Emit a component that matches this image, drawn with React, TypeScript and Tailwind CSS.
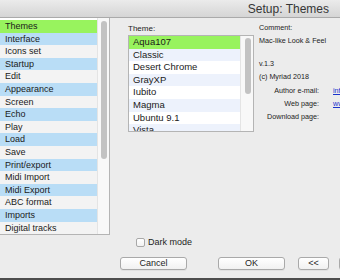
import React from 'react';

const sections = [
    'Themes',
    'Interface',
    'Icons set',
    'Startup',
    'Edit',
    'Appearance',
    'Screen',
    'Echo',
    'Play',
    'Load',
    'Save',
    'Print/export',
    'Midi Import',
    'Midi Export',
    'ABC format',
    'Imports',
    'Digital tracks',
];

const themes = ['Aqua107', 'Classic', 'Desert Chrome', 'GrayXP', 'Iubito', 'Magma', 'Ubuntu 9.1', 'Vista'];

function Button({ label, className }: { label: string; className: string }) {
    return (
        <div
            className={`flex h-[13px] shrink-0 items-center justify-center rounded-[3px] border border-[#a9a9a9] bg-gradient-to-b from-white to-[#f1f1f1] text-[9px] leading-none text-[#1e1e1e] shadow-[0_1px_0_rgba(0,0,0,0.05)] ${className}`}
        >
            {label}
        </div>
    );
}

export default function App() {
    return (
        <div className="flex h-[280px] w-[340px] flex-col overflow-hidden bg-[#ececec] font-['Liberation_Sans',Arial,sans-serif] text-[#1a1a1a]">
            {/* Title bar */}
            <div className="flex h-[18px] shrink-0 items-center justify-end border-b border-[#aaaaaa] bg-gradient-to-b from-[#ebebeb] to-[#d5d5d5] pr-[11px]">
                <span className="text-[12px] leading-none text-[#363636]">Setup: Themes</span>
            </div>

            <div className="flex flex-1">
                {/* Section list */}
                <div className="w-[110px] shrink-0">
                    <div className="flex h-[217px] border-r border-b border-[#b4b4b4] bg-white">
                        <div className="w-[97px] pt-[2px]">
                            {sections.map((s, i) => (
                                <div
                                    key={s}
                                    className={`h-[12.6px] pl-[5px] text-[9px] leading-[12.6px] ${
                                        i === 0 ? 'bg-[#98f35e]' : i % 2 === 1 ? 'bg-[#b9ddf6]' : 'bg-[#f3f3f3]'
                                    }`}
                                >
                                    {s}
                                </div>
                            ))}
                        </div>
                        <div className="flex-1 border-l border-[#e4e4e4] bg-[#f8f8f8] pt-[3px] pl-[3px]">
                            <div className="h-[138px] w-[6px] rounded-full bg-[#c2c2c2]" />
                        </div>
                    </div>
                </div>

                {/* Right side */}
                <div className="flex flex-1 flex-col pb-[8px]">
                    <div className="flex pt-[3px] pl-[18px]">
                        <div className="w-[126px] shrink-0 pt-[3px]">
                            <div className="h-[10px] text-[8px] leading-[10px] text-[#222]">Theme:</div>
                            <div className="mt-[1px] flex h-[97px] overflow-hidden border border-[#b4b4b4] bg-white">
                                <div className="flex-1">
                                    {themes.map((t, i) => (
                                        <div
                                            key={t}
                                            className={`h-[12.6px] pl-[4px] text-[9.5px] leading-[12.6px] ${
                                                i === 0 ? 'bg-[#98f35e]' : i % 2 === 1 ? 'bg-[#edf2fc]' : 'bg-white'
                                            }`}
                                        >
                                            {t}
                                        </div>
                                    ))}
                                </div>
                                <div className="w-[13px] border-l border-[#e4e4e4] bg-[#f8f8f8] pt-[2px] pl-[4px]">
                                    <div className="h-[56px] w-[6px] rounded-full bg-[#c2c2c2]" />
                                </div>
                            </div>
                        </div>

                        {/* Info */}
                        <div className="ml-[5px] flex flex-col text-[7.2px] leading-[13px] whitespace-nowrap text-[#222]">
                            <div className="h-[13px]">Comment:</div>
                            <div className="h-[13px]">Mac-like Look &amp; Feel</div>
                            <div className="h-[10px]" />
                            <div className="h-[13px]">v.1.3</div>
                            <div className="h-[13px]">(c) Myriad 2018</div>
                            <div className="mt-[1px] flex h-[13px]">
                                <span className="w-[60px] text-right">Author e-mail:</span>
                                <span className="ml-[14px] text-[#1a33cc] underline">info@myriad-online.com</span>
                            </div>
                            <div className="flex h-[13px]">
                                <span className="w-[60px] text-right">Web page:</span>
                                <span className="ml-[14px] text-[#1a33cc] underline">www.myriad-online.com</span>
                            </div>
                            <div className="flex h-[13px]">
                                <span className="w-[60px] text-right">Download page:</span>
                            </div>
                        </div>
                    </div>

                    <div className="flex-1" />

                    {/* Dark mode */}
                    <div className="flex h-[9px] items-center pl-[26px]">
                        <div className="h-[9px] w-[9px] rounded-[2px] border border-[#a8a8a8] bg-gradient-to-b from-white to-[#f2f2f2]" />
                        <span className="ml-[3px] text-[9px] leading-none text-[#1e1e1e]">Dark mode</span>
                    </div>

                    {/* Buttons */}
                    <div className="mt-[10px] flex pl-[10px]">
                        <Button label="Cancel" className="w-[67px]" />
                        <Button label="OK" className="ml-[31px] w-[67px]" />
                        <Button label="<<" className="ml-[13px] w-[31px]" />
                        <Button label="" className="ml-[10px] w-[31px]" />
                    </div>
                </div>
            </div>

            <div className="h-[2px] shrink-0 bg-[#4d4d4d]" />
        </div>
    );
}
